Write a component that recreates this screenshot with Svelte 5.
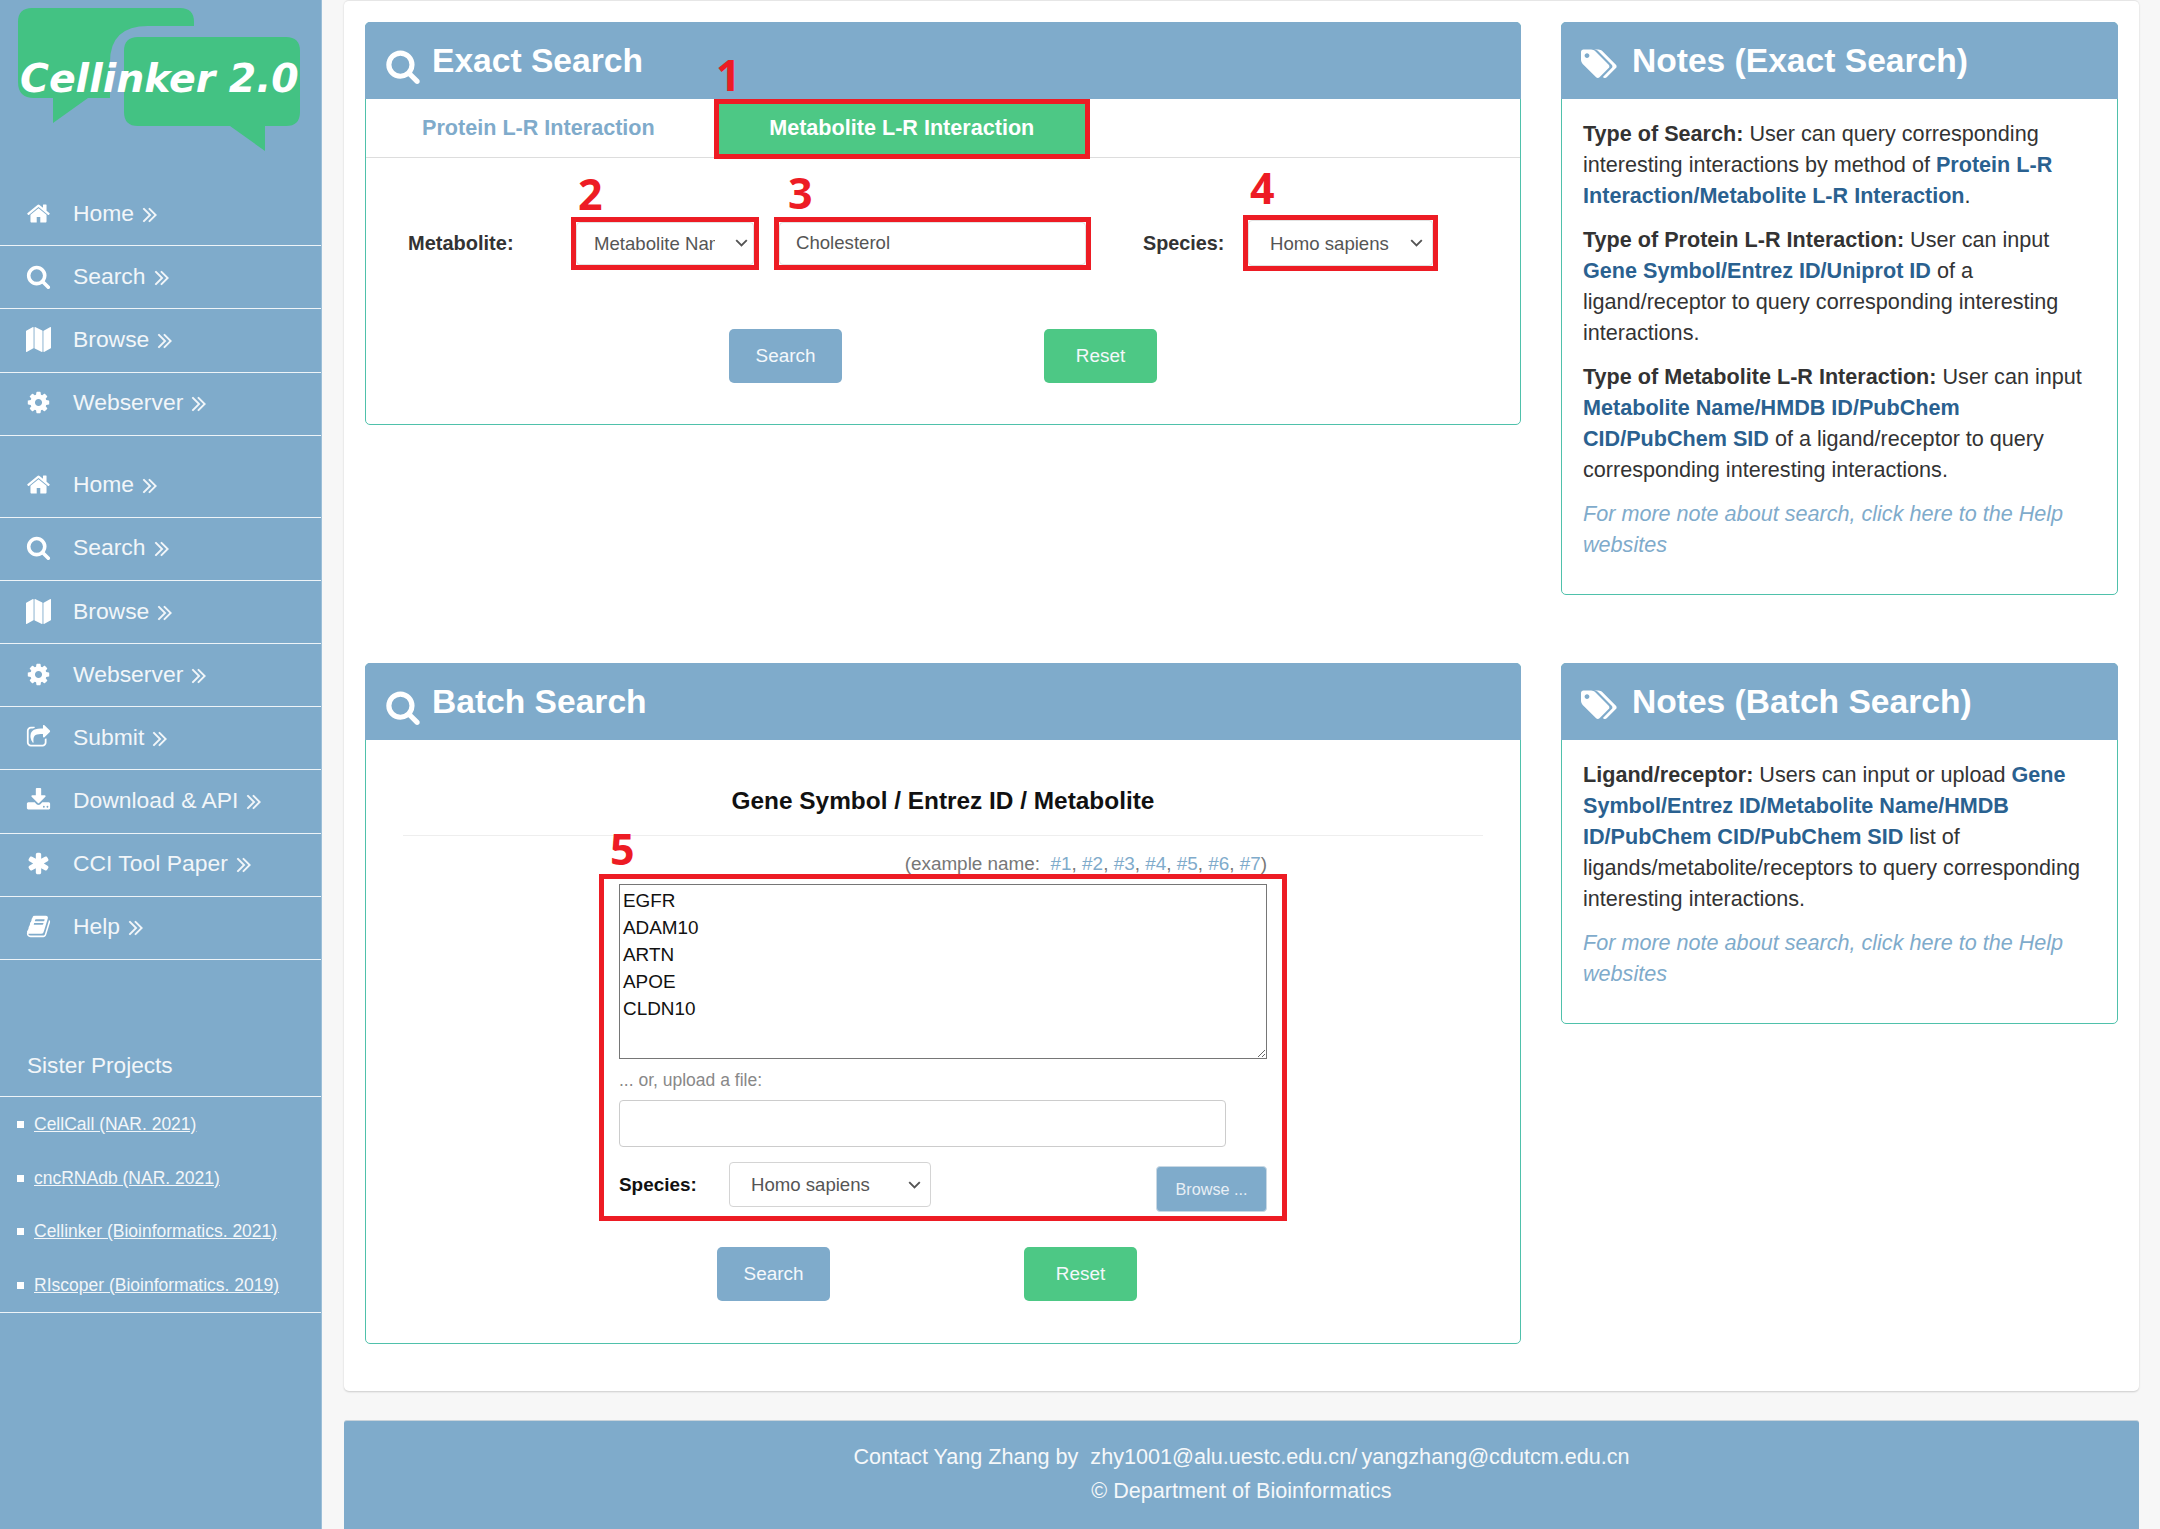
<script>
  const paths = {
    home: 'M1472 992v480q0 26-19 45t-45 19h-384v-384h-256v384h-384q-26 0-45-19t-19-45v-480q0-1 .5-3t.5-3l575-474 575 474q1 2 1 6zm223-69l-62 74q-8 9-21 11h-3q-13 0-21-7l-692-577-692 577q-12 8-24 7-13-2-21-11l-62-74q-8-10-7-23.5t11-21.5l719-599q32-26 76-26t76 26l244 204v-195q0-14 9-23t23-9h192q14 0 23 9t9 23v408l219 182q10 8 11 21.5t-7 23.5z',
    search: 'M1216 832q0-185-131.5-316.5t-316.5-131.5-316.5 131.5-131.5 316.5 131.5 316.5 316.5 131.5 316.5-131.5 131.5-316.5zm512 832q0 52-38 90t-90 38q-54 0-90-38l-343-342q-179 124-399 124-143 0-273.5-55.5t-225-150-150-225-55.5-273.5 55.5-273.5 150-225 225-150 273.5-55.5 273.5 55.5 225 150 150 225 55.5 273.5q0 220-124 399l343 343q37 37 37 90z',
    map: 'M512 0q13 0 22.5 9.5t9.5 22.5v1472q0 20-17 28l-480 256q-7 4-15 4-13 0-22.5-9.5t-9.5-22.5v-1472q0-20 17-28l480-256q7-4 15-4zm1248 0q13 0 22.5 9.5t9.5 22.5v1472q0 20-17 28l-480 256q-7 4-15 4-13 0-22.5-9.5t-9.5-22.5v-1472q0-20 17-28l480-256q7-4 15-4zm-1120 0q8 0 14 3l512 256q18 10 18 29v1472q0 13-9.5 22.5t-22.5 9.5q-8 0-14-3l-512-256q-18-10-18-29v-1472q0-13 9.5-22.5t22.5-9.5z',
    cog: 'M1152 896q0-106-75-181t-181-75-181 75-75 181 75 181 181 75 181-75 75-181zm512-109v222q0 12-8 23t-20 13l-185 28q-19 54-39 91 35 50 107 138 10 12 10 25t-9 23q-27 37-99 108t-94 71q-12 0-26-9l-138-108q-44 23-91 38-16 136-29 186-7 28-36 28h-222q-14 0-24.5-8.5t-11.5-21.5l-28-184q-49-16-90-37l-141 107q-10 9-25 9-14 0-25-11-126-114-165-168-7-10-7-23 0-12 8-23 15-21 51-66.5t54-70.5q-27-50-41-99l-183-27q-13-2-21-12.5t-8-23.5v-222q0-12 8-23t19-13l186-28q14-46 39-92-40-57-107-138-10-12-10-24 0-10 9-23 26-36 98.5-107.5t94.5-71.5q13 0 26 10l138 107q44-23 91-38 16-136 29-186 7-28 36-28h222q14 0 24.5 8.5t11.5 21.5l28 184q49 16 90 37l142-107q9-9 24-9 13 0 25 10 129 119 165 170 7 8 7 22 0 12-8 23-15 21-51 66.5t-54 70.5q26 50 41 98l183 28q13 2 21 12.5t8 23.5z',
    share: 'M1472 989v259q0 119-84.5 203.5t-203.5 84.5h-832q-119 0-203.5-84.5t-84.5-203.5v-832q0-119 84.5-203.5t203.5-84.5h255q13 0 22.5 9.5t9.5 22.5q0 27-26 32-77 26-133 60-10 4-16 4h-112q-66 0-113 47t-47 113v832q0 66 47 113t113 47h832q66 0 113-47t47-113v-214q0-19 18-29 28-13 54-37 16-16 35-8 21 9 21 29zm237-496l-384 384q-18 19-45 19-12 0-25-5-39-17-39-59v-192h-160q-323 0-438 131-119 137-74 473 3 23-20 34-8 2-12 2-16 0-26-13-10-14-21-31t-39.5-68.5-49.5-99.5-38.5-114-17.5-122q0-49 3.5-91t14-90 28-88 47-81.5 68.5-74 94.5-61.5 124.5-48.5 159.5-30.5 196.5-11h160v-192q0-42 39-59 13-5 25-5 26 0 45 19l384 384q19 19 19 45t-19 45z',
    download: 'M1344 1344q0-26-19-45t-45-19-45 19-19 45 19 45 45 19 45-19 19-45zm256 0q0-26-19-45t-45-19-45 19-19 45 19 45 45 19 45-19 19-45zm128-224v320q0 40-28 68t-68 28h-1472q-40 0-68-28t-28-68v-320q0-40 28-68t68-28h465l135 136q58 56 136 56t136-56l136-136h464q40 0 68 28t28 68zm-325-569q17 41-14 70l-448 448q-18 19-45 19t-45-19l-448-448q-31-29-14-70 17-39 59-39h256v-448q0-26 19-45t45-19h256q26 0 45 19t19 45v448h256q42 0 59 39z',
    asterisk: 'M1546 1050q46 26 59.5 77.5t-12.5 97.5l-64 110q-26 46-77.5 59.5t-97.5-12.5l-266-153v307q0 52-38 90t-90 38h-128q-52 0-90-38t-38-90v-307l-266 153q-46 26-97.5 12.5t-77.5-59.5l-64-110q-26-46-12.5-97.5t59.5-77.5l266-154-266-154q-46-26-59.5-77.5t12.5-97.5l64-110q26-46 77.5-59.5t97.5 12.5l266 153v-307q0-52 38-90t90-38h128q52 0 90 38t38 90v307l266-153q46-26 97.5-12.5t77.5 59.5l64 110q26 46 12.5 97.5t-59.5 77.5l-266 154z',
    book: 'M1703 478q40 57 18 129l-275 906q-19 64-76.5 107.5t-122.5 43.5h-923q-77 0-148.5-53.5t-99.5-131.5q-24-67-2-127 0-4 3-27t4-37q1-8-3-21.5t-3-19.5q2-11 8-21t16.5-23.5 16.5-23.5q23-38 45-91.5t30-91.5q3-10 .5-30t-.5-28q3-11 17-28t17-23q21-36 42-92t25-90q1-9-2.5-32t.5-28q4-13 22-30.5t22-22.5q19-26 42.5-84.5t27.5-96.5q1-8-3-25.5t-2-26.5q2-8 9-18t18-23 17-21q8-12 16.5-30.5t15-35 16-36 19.5-32 26.5-23.5 36-11.5 47.5 5.5l-1 3q38-9 51-9h761q74 0 114 56t18 130l-274 906q-36 119-71.5 153.5t-128.5 34.5h-869q-27 0-38 15-11 16-1 43 24 70 144 70h923q29 0 56-15.5t35-41.5l300-987q7-22 5-57 38 15 59 43zm-1064 2q-4 13 2 22.5t20 9.5h608q13 0 25.5-9.5t16.5-22.5l21-64q4-13-2-22.5t-20-9.5h-608q-13 0-25.5 9.5t-16.5 22.5zm-83 256q-4 13 2 22.5t20 9.5h608q13 0 25.5-9.5t16.5-22.5l21-64q4-13-2-22.5t-20-9.5h-608q-13 0-25.5 9.5t-16.5 22.5z'
  };
  const chevrons = 'M979 960q0 13-10 23l-466 466q-10 10-23 10t-23-10l-50-50q-10-10-10-23t10-23l393-393-393-393q-10-10-10-23t10-23l50-50q10-10 23-10t23 10l466 466q10 10 10 23zm384 0q0 13-10 23l-466 466q-10 10-23 10t-23-10l-50-50q-10-10-10-23t10-23l393-393-393-393q-10-10-10-23t10-23l50-50q10-10 23-10t23 10l466 466q10 10 10 23z';
  const tags = 'M448 448q0-53-37.5-90.5t-90.5-37.5-90.5 37.5-37.5 90.5 37.5 90.5 90.5 37.5 90.5-37.5 37.5-90.5zm1067 576q0 53-37 90l-491 492q-39 37-91 37-53 0-90-37l-715-716q-38-37-64.5-101t-26.5-117v-416q0-52 38-90t90-38h416q53 0 117 26.5t102 64.5l715 714q37 39 37 91zm384 0q0 53-37 90l-491 492q-39 37-91 37-36 0-59-14t-53-45l470-470q37-37 37-90 0-52-37-91l-715-714q-38-38-102-64.5t-117-26.5h224q53 0 117 26.5t102 64.5l715 714q37 39 37 91z';

  const topNav = [
    ['home', 'Home'],
    ['search', 'Search'],
    ['map', 'Browse'],
    ['cog', 'Webserver']
  ];
  const mainNav = [
    ...topNav,
    ['share', 'Submit'],
    ['download', 'Download & API'],
    ['asterisk', 'CCI Tool Paper'],
    ['book', 'Help']
  ];
  const sisters = [
    'CellCall (NAR. 2021)',
    'cncRNAdb (NAR. 2021)',
    'Cellinker (Bioinformatics. 2021)',
    'RIscoper (Bioinformatics. 2019)'
  ];
  const genes = 'EGFR\nADAM10\nARTN\nAPOE\nCLDN10';
</script>

{#snippet navList(items)}
  <ul class="nav">
    {#each items as [icon, label]}
      <li>
        <svg class="nav-icon" viewBox="0 0 1792 1792"><path d={paths[icon]} /></svg>
        <span>{label}</span>
        <svg class="chev" viewBox="340 430 1030 1060"><path d={chevrons} /></svg>
      </li>
    {/each}
  </ul>
{/snippet}

{#snippet searchIcon()}
  <svg class="head-search" viewBox="0 0 1792 1792"><path d={paths.search} /></svg>
{/snippet}

{#snippet tagIcon()}
  <svg class="head-tags" viewBox="0 0 1920 1792"><path d={tags} /></svg>
{/snippet}

<div class="page">
  <aside class="sidebar">
    <div class="logo">
      <svg width="321" height="182" viewBox="0 0 321 182">
        <path fill="#43c283" d="M32 8H180Q194 8 194 22V26H148Q110 26 110 62V98H88L53 123V98H34Q18 98 18 82V22Q18 8 32 8Z" />
        <path fill="#43c283" d="M138 37H286Q300 37 300 51V112Q300 126 286 126H265V151L230 126H138Q124 126 124 112V51Q124 37 138 37Z" />
        <text class="logo-text" x="20" y="92">Cellinker 2.0</text>
      </svg>
    </div>
    {@render navList(topNav)}
    <div class="nav-gap"></div>
    {@render navList(mainNav)}
    <h3 class="sister-title">Sister Projects</h3>
    <ul class="sisters">
      {#each sisters as name}
        <li><a href="#top">{name}</a></li>
      {/each}
    </ul>
  </aside>

  <div class="content">
    <main class="panel">
      <section class="box exact">
        <header class="box-head">
          {@render searchIcon()}
          <h2>Exact Search</h2>
        </header>
        <span class="mark m1">1</span>
        <div class="tabs">
          <a class="tab" href="#top">Protein L-R Interaction</a>
          <a class="tab active" href="#top">Metabolite L-R Interaction</a>
        </div>
        <div class="form-row">
          <span class="mark m2">2</span>
          <span class="mark m3">3</span>
          <span class="mark m4">4</span>
          <label class="lbl-metabolite" for="kind">Metabolite:</label>
          <div class="flag flag-kind">
            <select id="kind" class="control">
              <option>Metabolite Name</option>
              <option>HMDB ID</option>
            </select>
          </div>
          <div class="flag flag-term">
            <input class="control" value="Cholesterol" />
          </div>
          <label class="lbl-species" for="species1">Species:</label>
          <div class="flag flag-species">
            <select id="species1" class="control">
              <option>Homo sapiens</option>
              <option>Mus musculus</option>
            </select>
          </div>
        </div>
        <div class="actions exact-actions">
          <button class="btn blue">Search</button>
          <button class="btn green">Reset</button>
        </div>
      </section>

      <section class="box notes">
        <header class="box-head">
          {@render tagIcon()}
          <h2>Notes (Exact Search)</h2>
        </header>
        <div class="notes-body">
          <p><b>Type of Search:</b> User can query corresponding interesting interactions by method of <b class="hl">Protein L-R Interaction/Metabolite L-R Interaction</b>.</p>
          <p><b>Type of Protein L-R Interaction:</b> User can input <b class="hl">Gene Symbol/Entrez ID/Uniprot ID</b> of a ligand/receptor to query corresponding interesting interactions.</p>
          <p><b>Type of Metabolite L-R Interaction:</b> User can input <b class="hl">Metabolite Name/HMDB ID/PubChem CID/PubChem SID</b> of a ligand/receptor to query corresponding interesting interactions.</p>
          <p class="more"><a href="#top">For more note about search, click here to the Help websites</a></p>
        </div>
      </section>

      <section class="box batch">
        <header class="box-head">
          {@render searchIcon()}
          <h2>Batch Search</h2>
        </header>
        <div class="batch-body">
          <h4 class="batch-title">Gene Symbol / Entrez ID / Metabolite</h4>
          <span class="mark m5">5</span>
          <p class="example">(example name:&nbsp; <a href="#top">#1</a>, <a href="#top">#2</a>, <a href="#top">#3</a>, <a href="#top">#4</a>, <a href="#top">#5</a>, <a href="#top">#6</a>, <a href="#top">#7</a>)</p>
          <div class="batch-group">
            <textarea value={genes}></textarea>
            <p class="upload">... or, upload a file:</p>
            <input class="file-name" />
            <div class="species-row">
              <label for="species2">Species:</label>
              <select id="species2" class="control">
                <option>Homo sapiens</option>
                <option>Mus musculus</option>
              </select>
              <button class="browse">Browse ...</button>
            </div>
          </div>
          <div class="actions batch-actions">
            <button class="btn blue">Search</button>
            <button class="btn green">Reset</button>
          </div>
        </div>
      </section>

      <section class="box notes">
        <header class="box-head">
          {@render tagIcon()}
          <h2>Notes (Batch Search)</h2>
        </header>
        <div class="notes-body">
          <p><b>Ligand/receptor:</b> Users can input or upload <b class="hl">Gene Symbol/Entrez ID/Metabolite Name/HMDB ID/PubChem CID/PubChem SID</b> list of ligands/metabolite/receptors to query corresponding interesting interactions.</p>
          <p class="more"><a href="#top">For more note about search, click here to the Help websites</a></p>
        </div>
      </section>
    </main>

    <footer class="footer">
      <p>Contact Yang Zhang by&nbsp; zhy1001@alu.uestc.edu.cn/&#8201;yangzhang@cdutcm.edu.cn</p>
      <p>© Department of Bioinformatics</p>
    </footer>
  </div>
</div>

<style>
  :global(body) {
    margin: 0;
    background: #f7f7f7;
    font-family: "Liberation Sans", Arial, sans-serif;
    color: #333;
  }

  .page {
    display: flex;
    height: 1529px;
    overflow: hidden;
  }

  /* sidebar */
  .sidebar {
    width: 321px;
    flex: none;
    background: #7fabcb;
    color: #f2f6f9;
    box-shadow: 1px 0 0 #9cbfd8;
  }

  .logo {
    height: 183px;
  }

  .logo svg {
    display: block;
  }

  .logo-text {
    font-family: "DejaVu Sans", sans-serif;
    font-weight: 700;
    font-style: italic;
    font-size: 39.4px;
    fill: #fff;
  }

  .nav {
    list-style: none;
    margin: 0;
    padding: 0;
  }

  .nav li {
    height: 63.2px;
    box-sizing: border-box;
    border-bottom: 1px solid #eef4f8;
    display: flex;
    align-items: center;
    padding: 0 0 2px 26px;
    font-size: 22.9px;
  }

  .nav-gap {
    height: 18.8px;
  }

  .nav-icon {
    width: 25px;
    height: 25px;
    fill: #fff;
    margin-right: 22px;
    flex: none;
  }

  .chev {
    width: 15px;
    height: 16px;
    fill: #f2f6f9;
    margin: 3px 0 0 8px;
  }

  .sister-title {
    margin: 0;
    height: 137px;
    box-sizing: border-box;
    padding: 89px 0 0 27px;
    font-size: 22.6px;
    line-height: 34px;
    font-weight: 400;
    border-bottom: 1px solid #eef4f8;
  }

  .sisters {
    list-style: none;
    margin: 0;
    padding: 1px 0 0;
    height: 216px;
    box-sizing: border-box;
    border-bottom: 1px solid #eef4f8;
  }

  .sisters li {
    height: 53.5px;
    display: flex;
    align-items: center;
    padding-left: 17px;
    font-size: 17.5px;
  }

  .sisters li::before {
    content: "";
    width: 7px;
    height: 7px;
    background: #fff;
    margin-right: 10px;
  }

  .sisters a {
    color: #f2f6f9;
  }

  /* content */
  .content {
    width: 1795px;
    margin-left: 23px;
  }

  .panel {
    display: grid;
    grid-template-columns: 1156px 557px;
    grid-template-rows: 572px auto;
    column-gap: 40px;
    row-gap: 69px;
    align-items: start;
    height: 1391px;
    box-sizing: border-box;
    padding: 21px 21px 0;
    background: #fff;
    border-top: 1px solid #e6e6e6;
    border-radius: 5px;
    box-shadow: 0 1px 2px rgba(0, 0, 0, 0.18);
  }

  .box {
    position: relative;
    border: 1px solid #4fc1ab;
    border-radius: 5px;
    background: #fff;
  }

  .box-head {
    display: flex;
    align-items: center;
    height: 77px;
    margin: -1px -1px 0;
    padding-left: 20px;
    box-sizing: border-box;
    background: #7fabcb;
    border-radius: 5px 5px 0 0;
    color: #fff;
  }

  .box-head h2 {
    margin: 0;
    font-size: 33.6px;
    font-weight: 700;
  }

  .head-search {
    width: 36px;
    height: 36px;
    fill: #fff;
    margin: 10px 11px 0 0;
    flex: none;
  }

  .head-tags {
    width: 36px;
    height: 34px;
    fill: #fff;
    margin: 6px 15px 0 0;
    flex: none;
  }

  /* exact search */
  .tabs {
    display: flex;
    height: 59px;
    box-sizing: border-box;
    border-bottom: 1px solid #ddd;
    font-size: 21.6px;
    font-weight: 700;
  }

  .tab {
    margin-left: 56px;
    margin-right: 59px;
    line-height: 57px;
    color: #7fabcb;
    text-decoration: none;
  }

  .tab.active {
    margin: 0;
    width: 376px;
    height: 60px;
    box-sizing: border-box;
    border: 5px solid #ed1c24;
    background: #4dc885;
    color: #fff;
    text-align: center;
    line-height: 48px;
  }

  .form-row {
    position: relative;
    display: flex;
    align-items: center;
    height: 56px;
    margin-top: 57px;
    padding-left: 42px;
  }

  .form-row label {
    font-weight: 700;
    color: #333;
    font-size: 20px;
  }

  .lbl-metabolite {
    width: 163px;
  }

  .form-row .lbl-species {
    margin-left: 52px;
    width: 100px;
    font-size: 19.8px;
  }

  .flag {
    border: 5px solid #ed1c24;
    box-sizing: border-box;
    display: flex;
  }

  .flag-kind {
    width: 188px;
    height: 53px;
  }

  .flag-term {
    width: 317px;
    height: 53px;
    margin-left: 15px;
  }

  .flag-species {
    width: 195px;
    height: 56px;
  }

  .control {
    width: 100%;
    height: 100%;
    box-sizing: border-box;
    background: #fff;
    border: 1px solid #d4d4d4;
    border-radius: 4px;
    color: #555;
    font-family: "Liberation Sans", Arial, sans-serif;
    font-size: 18.6px;
    padding: 0 17px 0 16px;
    outline: none;
  }

  select.control {
    appearance: none;
    padding: 0 38px 0 21px;
    background-image: url("data:image/svg+xml,%3Csvg xmlns='http://www.w3.org/2000/svg' width='13' height='8' viewBox='0 0 13 8'%3E%3Cpath d='M1.2 1.2l5.3 5.3 5.3-5.3' fill='none' stroke='%23555' stroke-width='1.9'/%3E%3C/svg%3E");
    background-repeat: no-repeat;
    background-position: right 9px center;
  }

  .flag-kind select.control {
    padding-left: 17px;
    background-position: right 5px center;
  }

  .flag .control {
    border-color: #e2e2e2;
  }

  .actions {
    display: flex;
  }

  .btn {
    width: 113px;
    height: 54px;
    border: none;
    border-radius: 5px;
    color: #f4f8fb;
    font-family: "Liberation Sans", Arial, sans-serif;
    font-size: 18.9px;
    padding: 0;
  }

  .blue {
    background: #7fabcb;
  }

  .green {
    background: #4dc885;
  }

  .exact-actions {
    margin: 58px 0 41px 363px;
    gap: 202px;
  }

  /* notes */
  .notes-body {
    padding: 19px 21px 21px 21px;
    font-size: 21.6px;
    line-height: 31px;
    color: #333;
  }

  .notes-body p {
    margin: 0 0 13px;
  }

  .hl {
    color: #2a6190;
  }

  .more {
    font-style: italic;
  }

  .more a {
    color: #7fabcb;
    text-decoration: none;
  }

  /* batch search */
  .batch-body {
    position: relative;
    padding: 0 37px;
  }

  .batch-title {
    margin: 0;
    height: 96px;
    box-sizing: border-box;
    padding-top: 46px;
    line-height: 30px;
    text-align: center;
    font-size: 24.4px;
    font-weight: 700;
    color: #111;
    border-bottom: 1px solid #eee;
  }

  .example {
    margin: 0;
    height: 38px;
    padding: 17px 216px 0 0;
    box-sizing: border-box;
    line-height: 22px;
    text-align: right;
    color: #777;
    font-size: 18.9px;
  }

  .example a {
    color: #7fabcb;
    text-decoration: none;
  }

  .batch-group {
    margin-left: 196px;
    width: 688px;
    height: 347px;
    box-sizing: border-box;
    border: 5px solid #ed1c24;
    padding: 5px 15px 0;
  }

  textarea {
    display: block;
    width: 648px;
    height: 175px;
    box-sizing: border-box;
    border: 1px solid #767676;
    padding: 2px 3px;
    font-family: "Liberation Sans", Arial, sans-serif;
    font-size: 18.9px;
    line-height: 27px;
    color: #111;
    outline: none;
  }

  .upload {
    margin: 0;
    height: 41px;
    line-height: 42px;
    font-size: 17.5px;
    color: #888;
  }

  .file-name {
    display: block;
    width: 607px;
    height: 47px;
    box-sizing: border-box;
    border: 1px solid #ccc;
    border-radius: 4px;
    outline: none;
  }

  .species-row {
    display: flex;
    align-items: flex-start;
    margin-top: 15px;
  }

  .species-row label {
    width: 110px;
    font-size: 18.9px;
    font-weight: 700;
    line-height: 46px;
    color: #111;
  }

  .species-row .control {
    width: 202px;
    height: 45px;
  }

  .browse {
    margin: 4px 0 0 auto;
    width: 111px;
    height: 46px;
    border: 1px solid #c8d8e4;
    border-radius: 4px;
    background: #7fabcb;
    color: #e8eff5;
    font-family: "Liberation Sans", Arial, sans-serif;
    font-size: 16.2px;
    padding: 0;
  }

  .batch-actions {
    margin: 26px 0 42px 314px;
    gap: 194px;
  }

  /* red numbers over the form */
  .mark {
    position: absolute;
    font-family: "Noto Sans", sans-serif;
    font-weight: 700;
    font-size: 43px;
    line-height: 32px;
    color: #ed1c24;
  }

  .m1 {
    left: 350px;
    top: 36px;
  }

  .m2 {
    left: 212px;
    top: -37px;
  }

  .m3 {
    left: 422px;
    top: -38px;
  }

  .m4 {
    left: 884px;
    top: -43px;
  }

  .m5 {
    left: 244px;
    top: 93px;
  }

  /* footer */
  .footer {
    height: 109px;
    margin-top: 29px;
    box-sizing: border-box;
    padding-top: 19px;
    background: #7fabcb;
    border-top: 1px solid #c9d3da;
    border-radius: 3px 3px 0 0;
    color: #f5f8fa;
    text-align: center;
    font-size: 21.6px;
    line-height: 34px;
  }

  .footer p {
    margin: 0;
  }
</style>
